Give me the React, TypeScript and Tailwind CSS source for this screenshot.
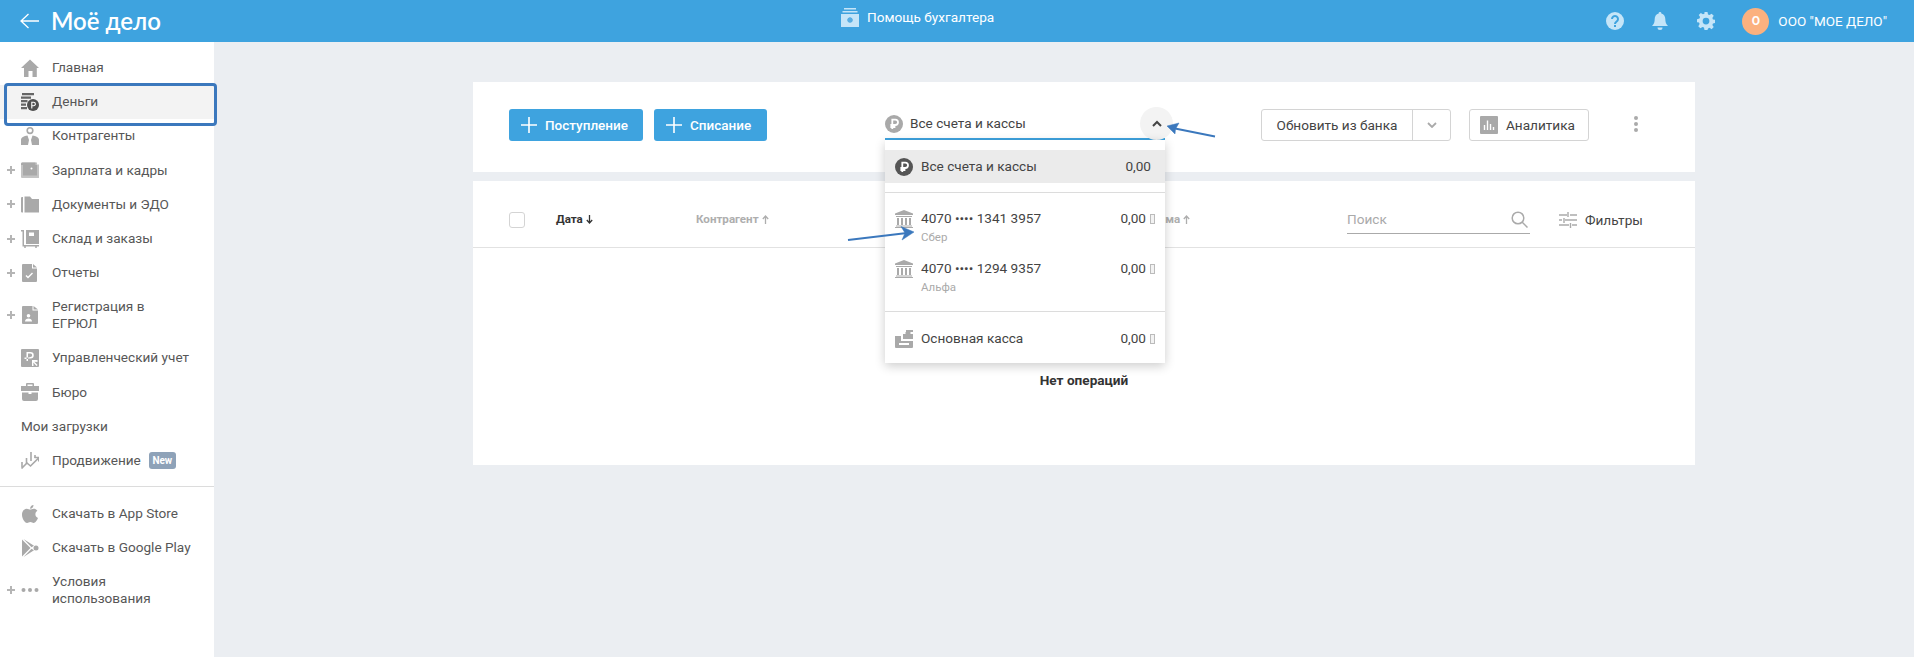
import React from "react";

const G = "#a9a9a9";

const Ruble = ({ bg = G, size = 18 }: { bg?: string; size?: number }) => (
  <svg width={size} height={size} viewBox="0 0 18 18" className="shrink-0">
    <circle cx="9" cy="9" r="9" fill={bg} />
    <path d="M7.300 14V4.600h3a2.600 2.600 0 0 1 0 5.400H5.400M5.400 12h5" fill="none" stroke="#fff" strokeWidth="1.800" />
  </svg>
);

const Ic = ({ children }: { children: React.ReactNode }) => (
  <svg width="18" height="18" viewBox="0 0 18 18" className="shrink-0" fill={G}>
    {children}
  </svg>
);

const icons: Record<string, React.ReactNode> = {
  home: <Ic><path d="M9 0.500 18 9h-2.200v9h-4.300v-6h-4v6H3V9H0z" /></Ic>,
  money: (
    <Ic>
      <path fill="#666" d="M1 0h12v2.200H1zM0 3.500h10v2.200H0zM0 7h6.500v2.200H0zM0 10.500h5v2.200H0zM0 14h6v2.200H0z" />
      <circle cx="12" cy="12" r="6" fill="#4f4f4f" />
      <path d="M10.800 15.500V9.200h1.800a1.700 1.700 0 0 1 0 3.500h-2.400" fill="none" stroke="#fff" strokeWidth="1.100" />
    </Ic>
  ),
  partner: (
    <Ic>
      <path fillRule="evenodd" d="M9 0a3.600 3.600 0 1 1 0 7.200A3.600 3.600 0 0 1 9 0zm0 1.600a2 2 0 1 0 0 4 2 2 0 0 0 0-4z" />
      <path d="M0 18v-5c0-3 3-4 6.500-4.600L8 13l-1 5zM18 18v-5c0-3-3-4-6.500-4.600L10 13l1 5z" />
    </Ic>
  ),
  salary: (
    <Ic>
      <path fill="#c4c4c4" d="M1 1.500h15v2h2V17H1a1 1 0 0 1-1-1V2.500a1 1 0 0 1 1-1z" />
      <path d="M0 3a1.500 1.500 0 0 1 1.500-1.500h13V4H16v10.500H2V4H0z" />
      <circle cx="10.500" cy="7.500" r="1" fill="#fff" />
    </Ic>
  ),
  folder: <Ic><path d="M0 3a1 1 0 0 1 1-1h1v15.500H1a1 1 0 0 1-1-1zM3.500 1.500H9l2 2.500h7v13.500H3.500z" /></Ic>,
  store: (
    <Ic>
      <path d="M0 0h3v15H18v1.500H1.500V1.500H0z" />
      <path fillRule="evenodd" d="M5 0h13v14H5zm3 2.500V6h5V2.500z" />
      <circle cx="4" cy="17" r="1" /><circle cx="15" cy="17" r="1" />
    </Ic>
  ),
  report: (
    <Ic>
      <path fillRule="evenodd" d="M1 1a1 1 0 0 1 1-1h9v4.500h5V17a1 1 0 0 1-1 1H2a1 1 0 0 1-1-1zm3.500 11 2.500 2.500 5-5-1-1-4 4-1.500-1.500z" />
      <path d="M12 0l4 3.500h-4z" />
    </Ic>
  ),
  reg: (
    <Ic>
      <path fillRule="evenodd" d="M1 1a1 1 0 0 1 1-1h9.500v4.500H17V17a1 1 0 0 1-1 1H2a1 1 0 0 1-1-1zm6.500 7a1.800 1.800 0 1 0 0 3.600A1.800 1.800 0 0 0 7.500 8zM4 15.500h7c0-2-1.500-3-3.500-3S4 13.500 4 15.500z" />
      <path d="M12.500 0 17 3.500h-4.500z" />
    </Ic>
  ),
  mgmt: (
    <Ic>
      <path fillRule="evenodd" d="M1 0h16a1 1 0 0 1 1 1v16a1 1 0 0 1-1 1H1a1 1 0 0 1-1-1V1a1 1 0 0 1 1-1zm4.500 3v9H7V9.500h2.500a3.200 3.200 0 0 0 0-6.500zM7 4.500h2.400a1.700 1.700 0 0 1 0 3.500H7zM3.500 8.500V10h5V8.500zM11 11v6h1.500l-.2-3.500 3.300 3.500 1-1-3.300-3.300 3.200.3V11z" />
    </Ic>
  ),
  bureau: (
    <Ic>
      <path fillRule="evenodd" d="M6 0h6a1 1 0 0 1 1 1v2h5v5H0V3h5V1a1 1 0 0 1 1-1zm.500 1.500V3h5V1.500z" />
      <path d="M1 9.500h6.500V11h3V9.500H17V16a2 2 0 0 1-2 2H3a2 2 0 0 1-2-2z" />
    </Ic>
  ),
  promo: (
    <svg width="18" height="18" viewBox="0 0 18 18" className="shrink-0" fill="none" stroke={G} strokeWidth="1.600">
      <path d="M1 11v5M5.500 7v6M10 1v9M14 4v3" />
      <path d="M0.500 17.500 6 12l3.500 3L17.500 7" />
      <path d="M13.500 6.500h4.300v4" />
    </svg>
  ),
  apple: (
    <Ic>
      <path d="M12.500 0c.1 1.900-1.500 3.800-3.400 3.700C8.900 1.900 10.600.1 12.500 0zM9.100 4.600c.9 0 2-.9 3.600-.9 1.500 0 2.900.8 3.700 2-3 1.800-2.500 6 .6 7.200-.9 2-2.600 5-4.400 5-1.200 0-1.700-.8-3.200-.8-1.600 0-2.100.8-3.300.8C3.800 18 1 13.400 1 9.700c0-3.600 2.300-5.900 4.800-5.900 1.500 0 2.500.8 3.300.8z" />
    </Ic>
  ),
  play: (
    <Ic>
      <path d="M1 0.500 9.500 9 1 17.500z" />
      <path d="M2.500 0 13 6.800 10.500 8.300zM2.500 18 13 11.200 10.500 9.700z" />
      <circle cx="15" cy="9" r="2.500" />
    </Ic>
  ),
  dots: <Ic><circle cx="2.500" cy="9" r="2" /><circle cx="9" cy="9" r="2" /><circle cx="15.500" cy="9" r="2" /></Ic>,
};

const Item = ({ icon, label, plus, tall, badge }: { icon: string; label: string; plus?: boolean; tall?: boolean; badge?: boolean }) => (
  <div className={`relative flex items-center pl-[21px] ${tall ? "h-[51px]" : "h-[34.2px]"}`}>
    {plus && (
      <svg width="8" height="8" viewBox="0 0 8 8" className="absolute left-[7px] top-1/2 -translate-y-1/2">
        <path d="M4 0v8M0 4h8" stroke="#b5b5b5" strokeWidth="2" />
      </svg>
    )}
    {icons[icon]}
    <span className="ml-[13px] text-[13.600px] leading-[17px] text-[#575757] whitespace-pre-line">
      {badge ? (
        <span className="flex items-center whitespace-nowrap">
          {label}
          <span className="ml-[8px] flex h-[17px] w-[27px] items-center justify-center rounded-[3px] bg-[#8ea2b8] text-[10px] font-bold text-white">New</span>
        </span>
      ) : (
        label
      )}
    </span>
  </div>
);

const Sidebar = () => (
  <aside className="relative w-[214px] shrink-0 bg-white pt-[8.500px]">
    <Item icon="home" label="Главная" />
    <div className="bg-[#f3f3f3]"><Item icon="money" label="Деньги" /></div>
    <Item icon="partner" label="Контрагенты" />
    <Item icon="salary" label="Зарплата и кадры" plus />
    <Item icon="folder" label="Документы и ЭДО" plus />
    <Item icon="store" label="Склад и заказы" plus />
    <Item icon="report" label="Отчеты" plus />
    <Item icon="reg" label={"Регистрация в\nЕГРЮЛ"} plus tall />
    <Item icon="mgmt" label="Управленческий учет" />
    <Item icon="bureau" label="Бюро" />
    <div className="flex h-[34.200px] items-center pl-[21px] text-[13.600px] text-[#575757]">Мои загрузки</div>
    <Item icon="promo" label="Продвижение" badge />
    <div className="mt-[8px] mb-[10px] h-px bg-[#dcdcdc]" />
    <Item icon="apple" label="Скачать в App Store" />
    <Item icon="play" label="Скачать в Google Play" />
    <Item icon="dots" label={"Условия\nиспользования"} plus tall />
  </aside>
);

const Header = () => (
  <header className="relative flex h-[42px] shrink-0 items-center bg-[#3ea3df] text-white">
    <svg width="20" height="16" viewBox="0 0 20 16" className="ml-[20px]" fill="none" stroke="#fff" strokeWidth="1.300">
      <path d="M19 8H1M8.500 1 1 8l7.500 7" />
    </svg>
    <span className="ml-[11px] font-['Lato',sans-serif] text-[24px] leading-none font-semibold">Моё дело</span>
    <div className="absolute left-[841px] top-[8px] flex items-center">
      <svg width="18" height="19" viewBox="0 0 18 19" fill="#c5e5f8">
        <path d="M3 0h12v1.500H3zM1.500 3h15v1.500h-15z" />
        <path fillRule="evenodd" d="M0 6h18v13H0zm9 3.500a2.500 2.500 0 1 0 0 5 2.500 2.500 0 0 0 0-5z" />
        <circle cx="9" cy="12" r="2.500" fill="#5aaee2" />
      </svg>
      <span className="ml-[8px] text-[13.600px] leading-[17px]">Помощь бухгалтера</span>
    </div>
    <div className="ml-auto flex items-center">
      <svg width="18" height="18" viewBox="0 0 18 18">
        <circle cx="9" cy="9" r="9" fill="#c5e5f8" />
        <path d="M6 7a3 3 0 1 1 4.500 2.600C9.500 10.200 9 10.700 9 12" fill="none" stroke="#3ea3df" strokeWidth="2" />
        <rect x="8" y="13" width="2" height="2" fill="#3ea3df" />
      </svg>
      <svg width="16" height="18" viewBox="0 0 16 18" className="ml-[28px]" fill="#c5e5f8">
        <path d="M8 0a1.300 1.300 0 0 1 1.300 1.500C12 2 13.300 4.500 13.300 7c0 3 .7 5 2.700 7H0c2-2 2.700-4 2.700-7 0-2.500 1.300-5 4-5.500A1.300 1.300 0 0 1 8 0z" />
        <path d="M5.500 15.500h5a2.500 2.500 0 0 1-5 0z" />
      </svg>
      <svg width="18" height="18" viewBox="0 0 24 24" className="ml-[29px]" fill="#c5e5f8">
        <path fillRule="evenodd" d="M10 0h4l.7 3.300 2 .8L19.500 2.300l2.800 2.800-1.800 2.800.8 2 3.300.7v4l-3.300.7-.8 2 1.800 2.800-2.800 2.800-2.800-1.800-2 .8L14 24h-4l-.7-3.300-2-.8-2.800 1.800-2.800-2.800 1.800-2.800-.8-2L0 13.500v-4l3.300-.7.8-2-1.800-2.800 2.800-2.800 2.800 1.800 2-.8zM12 7.500a4.500 4.500 0 1 0 0 9 4.500 4.500 0 0 0 0-9z" />
      </svg>
      <div className="ml-[27px] flex h-[27px] w-[27px] items-center justify-center rounded-full bg-[#fbb17f] text-[12px] font-bold">О</div>
      <span className="ml-[9px] mr-[27px] text-[13.500px] leading-[17px]">ООО "МОЕ ДЕЛО"</span>
    </div>
  </header>
);

const BlueButton = ({ label, w, cls }: { label: string; w: string; cls?: string }) => (
  <button className={`flex h-[32px] items-center rounded-[3px] bg-[#3ea3df] pl-[12px] text-[13.500px] font-medium text-white ${w} ${cls ?? ""}`}>
    <svg width="16" height="16" viewBox="0 0 16 16" className="shrink-0">
      <path d="M8 0v16M0 8h16" stroke="#fff" strokeWidth="1.600" />
    </svg>
    <span className="ml-[8px]">{label}</span>
  </button>
);

const Toolbar = () => (
  <section className="flex h-[90px] items-start bg-white pl-[36px] pt-[27px]">
    <BlueButton label="Поступление" w="w-[134px]" />
    <BlueButton label="Списание" w="w-[113px]" cls="ml-[11px]" />
    <div className="relative ml-[118px] flex h-[31px] w-[280px] items-center border-b-2 border-[#3ea3df]">
      <Ruble />
      <span className="ml-[7px] text-[13.600px] text-[#444]">Все счета и кассы</span>
      <div className="absolute left-[255px] top-[-2px] flex h-[33px] w-[33px] items-center justify-center rounded-full bg-[#f3f3f3]">
        <svg width="10" height="7" viewBox="0 0 10 7" fill="none" stroke="#444" strokeWidth="2"><path d="M1 6l4-4 4 4" /></svg>
      </div>
    </div>
    <div className="ml-[96px] flex h-[32px] w-[190px] items-center rounded-[3px] border border-[#d4d4d4] text-[13.600px] text-[#444]">
      <span className="w-[151px] border-r border-[#d4d4d4] text-center leading-[30px]">Обновить из банка</span>
      <svg width="10" height="6" viewBox="0 0 10 6" className="ml-[14px]" fill="none" stroke="#aaa" strokeWidth="1.800"><path d="M1 1l4 4 4-4" /></svg>
    </div>
    <div className="ml-[18px] flex h-[32px] w-[120px] items-center rounded-[3px] border border-[#d4d4d4] pl-[10px] text-[13.600px] text-[#444]">
      <svg width="18" height="18" viewBox="0 0 18 18" className="shrink-0">
        <rect width="18" height="18" rx="1" fill={G} />
        <path d="M4.500 9v5M7.500 4.500V14M10.500 8v6M13.500 11v3" stroke="#fff" strokeWidth="1.400" />
      </svg>
      <span className="ml-[8px]">Аналитика</span>
    </div>
    <div className="ml-[45px] mt-[7px] flex flex-col gap-[2px]">
      <i className="block h-[4px] w-[4px] rounded-full bg-[#aaa]" />
      <i className="block h-[4px] w-[4px] rounded-full bg-[#aaa]" />
      <i className="block h-[4px] w-[4px] rounded-full bg-[#aaa]" />
    </div>
  </section>
);

const SortArrow = ({ down, color }: { down?: boolean; color: string }) => (
  <svg width="7" height="9" viewBox="0 0 7 9" className={`ml-[3px] ${down ? "" : "rotate-180"}`} fill="none" stroke={color} strokeWidth="1.300">
    <path d="M3.500 0v8M0.800 5l2.700 3 2.700-3" />
  </svg>
);

const Table = () => (
  <section className="mt-[9px] h-[284px] bg-white">
    <div className="flex h-[67px] items-center border-b border-[#e2e2e2] pl-[36px] pt-[12px] text-[11.600px]">
      <span className="h-[16px] w-[16px] rounded-[3px] border border-[#d4d4d4]" />
      <span className="ml-[31px] flex w-[140px] items-center font-bold text-[#333]">Дата<SortArrow down color="#333" /></span>
      <span className="flex w-[400px] items-center font-bold text-[#aeaeae]">Контрагент<SortArrow color="#aeaeae" /></span>
      <span className="ml-[47px] flex w-[100px] items-center font-bold text-[#aeaeae]">Сумма<SortArrow color="#aeaeae" /></span>
      <div className="ml-[104px] mt-[-1px] flex h-[28px] w-[183px] items-center justify-between border-b border-[#aaa] pr-[2px]">
        <span className="text-[13.600px] text-[#aaa]">Поиск</span>
        <svg width="17" height="17" viewBox="0 0 17 17" fill="none" stroke="#aaa" strokeWidth="1.500"><circle cx="7" cy="7" r="5.800" /><path d="M11 11l5.500 5.500" /></svg>
      </div>
      <svg width="18" height="16" viewBox="0 0 18 16" className="ml-[29px]" fill="none" stroke="#aaa" strokeWidth="1.400">
        <path d="M0 3h8M11 3h7M9 0v5M0 8h3M6 8h12M5 6v5M0 13h10M13 13h5M11.500 11v5" />
      </svg>
      <span className="ml-[8px] text-[13.600px] text-[#444]">Фильтры</span>
    </div>
    <div className="pt-[124px] text-center text-[13.600px] leading-[17px] font-bold text-[#333]">Нет операций</div>
  </section>
);

const Tofu = () => <i className="ml-[4px] inline-block h-[10px] w-[5px] border border-[#bbb] bg-[#f2f2f2] align-[-1px]" />;

const bank = (
  <svg width="18" height="18" viewBox="0 0 18 18" className="shrink-0" fill={G}>
    <path d="M9 0 18 3.500V5H0V3.500zM1 6h16v1H1zM2 8h2v7H2zM6 8h2v7H6zM10 8h2v7h-2zM14 8h2v7h-2zM1 15.500h16v1H1zM0 17h18v1H0z" />
  </svg>
);

const Row = ({ icon, label, sub, h }: { icon: React.ReactNode; label: string; sub?: string; h: string }) => (
  <div className={`flex px-[10px] ${h}`}>
    <div className="pt-[1px]">{icon}</div>
    <div className="ml-[8px] flex-1">
      <div className="text-[13.600px] leading-[18px] text-[#444]">{label}</div>
      {sub && <div className="mt-[3px] text-[11.500px] leading-[15px] text-[#aaa]">{sub}</div>}
    </div>
    <div className="text-[13.600px] leading-[18px] text-[#444]">0,00<Tofu /></div>
  </div>
);

const Dropdown = () => (
  <div className="absolute left-[885px] top-[140px] w-[280px] bg-white pt-[10px] shadow-[0_3px_10px_rgba(0,0,0,0.2)]">
    <div className="flex h-[33px] items-center bg-[#ebebeb] pl-[10px] pr-[14px] text-[13.600px] text-[#444]">
      <Ruble bg="#555" />
      <span className="ml-[8px] flex-1">Все счета и кассы</span>
      <span>0,00</span>
    </div>
    <div className="mt-[9px] h-px bg-[#dcdcdc]" />
    <div className="pt-[16px]">
      <Row icon={bank} label="4070 •••• 1341 3957" sub="Сбер" h="h-[50px]" />
      <Row icon={bank} label="4070 •••• 1294 9357" sub="Альфа" h="h-[52px]" />
    </div>
    <div className="h-px bg-[#dcdcdc]" />
    <div className="pt-[17px] pb-[16px]">
      <Row
        icon={
          <svg width="18" height="18" viewBox="0 0 18 18" fill={G}>
            <path d="M11 0h7v2h-2.500v2H18v5H8V4h2.500V2H11zM0 6h6v5h12v6a1 1 0 0 1-1 1H1a1 1 0 0 1-1-1zM4 13v2h10v-2z" />
          </svg>
        }
        label="Основная касса"
        h="h-[18px]"
      />
    </div>
  </div>
);

const Annotations = () => (
  <>
    <div className="absolute left-[4px] top-[83px] h-[43px] w-[213px] rounded-[4px] border-[3px] border-[#3b78bd]" />
    <svg width="1914" height="657" className="pointer-events-none absolute left-0 top-0" fill="#3b78bd" stroke="#3b78bd">
      <path d="M1215 136.500 1175 128.500" strokeWidth="1.800" fill="none" />
      <path d="M1167 126 1179 123 1175.500 129 1175 134z" strokeWidth="0.500" />
      <path d="M848 240 907 233" strokeWidth="1.800" fill="none" />
      <path d="M914 232 901 226.500 905 233 902 240z" strokeWidth="0.500" />
    </svg>
  </>
);

export default function App() {
  return (
    <div className="relative flex h-[657px] w-[1914px] flex-col overflow-hidden bg-[#ebeef2] font-['Roboto',sans-serif]">
      <Header />
      <div className="flex flex-1">
        <Sidebar />
        <main className="ml-[259px] w-[1222px] pt-[40px]">
          <Toolbar />
          <Table />
        </main>
      </div>
      <Dropdown />
      <Annotations />
    </div>
  );
}
